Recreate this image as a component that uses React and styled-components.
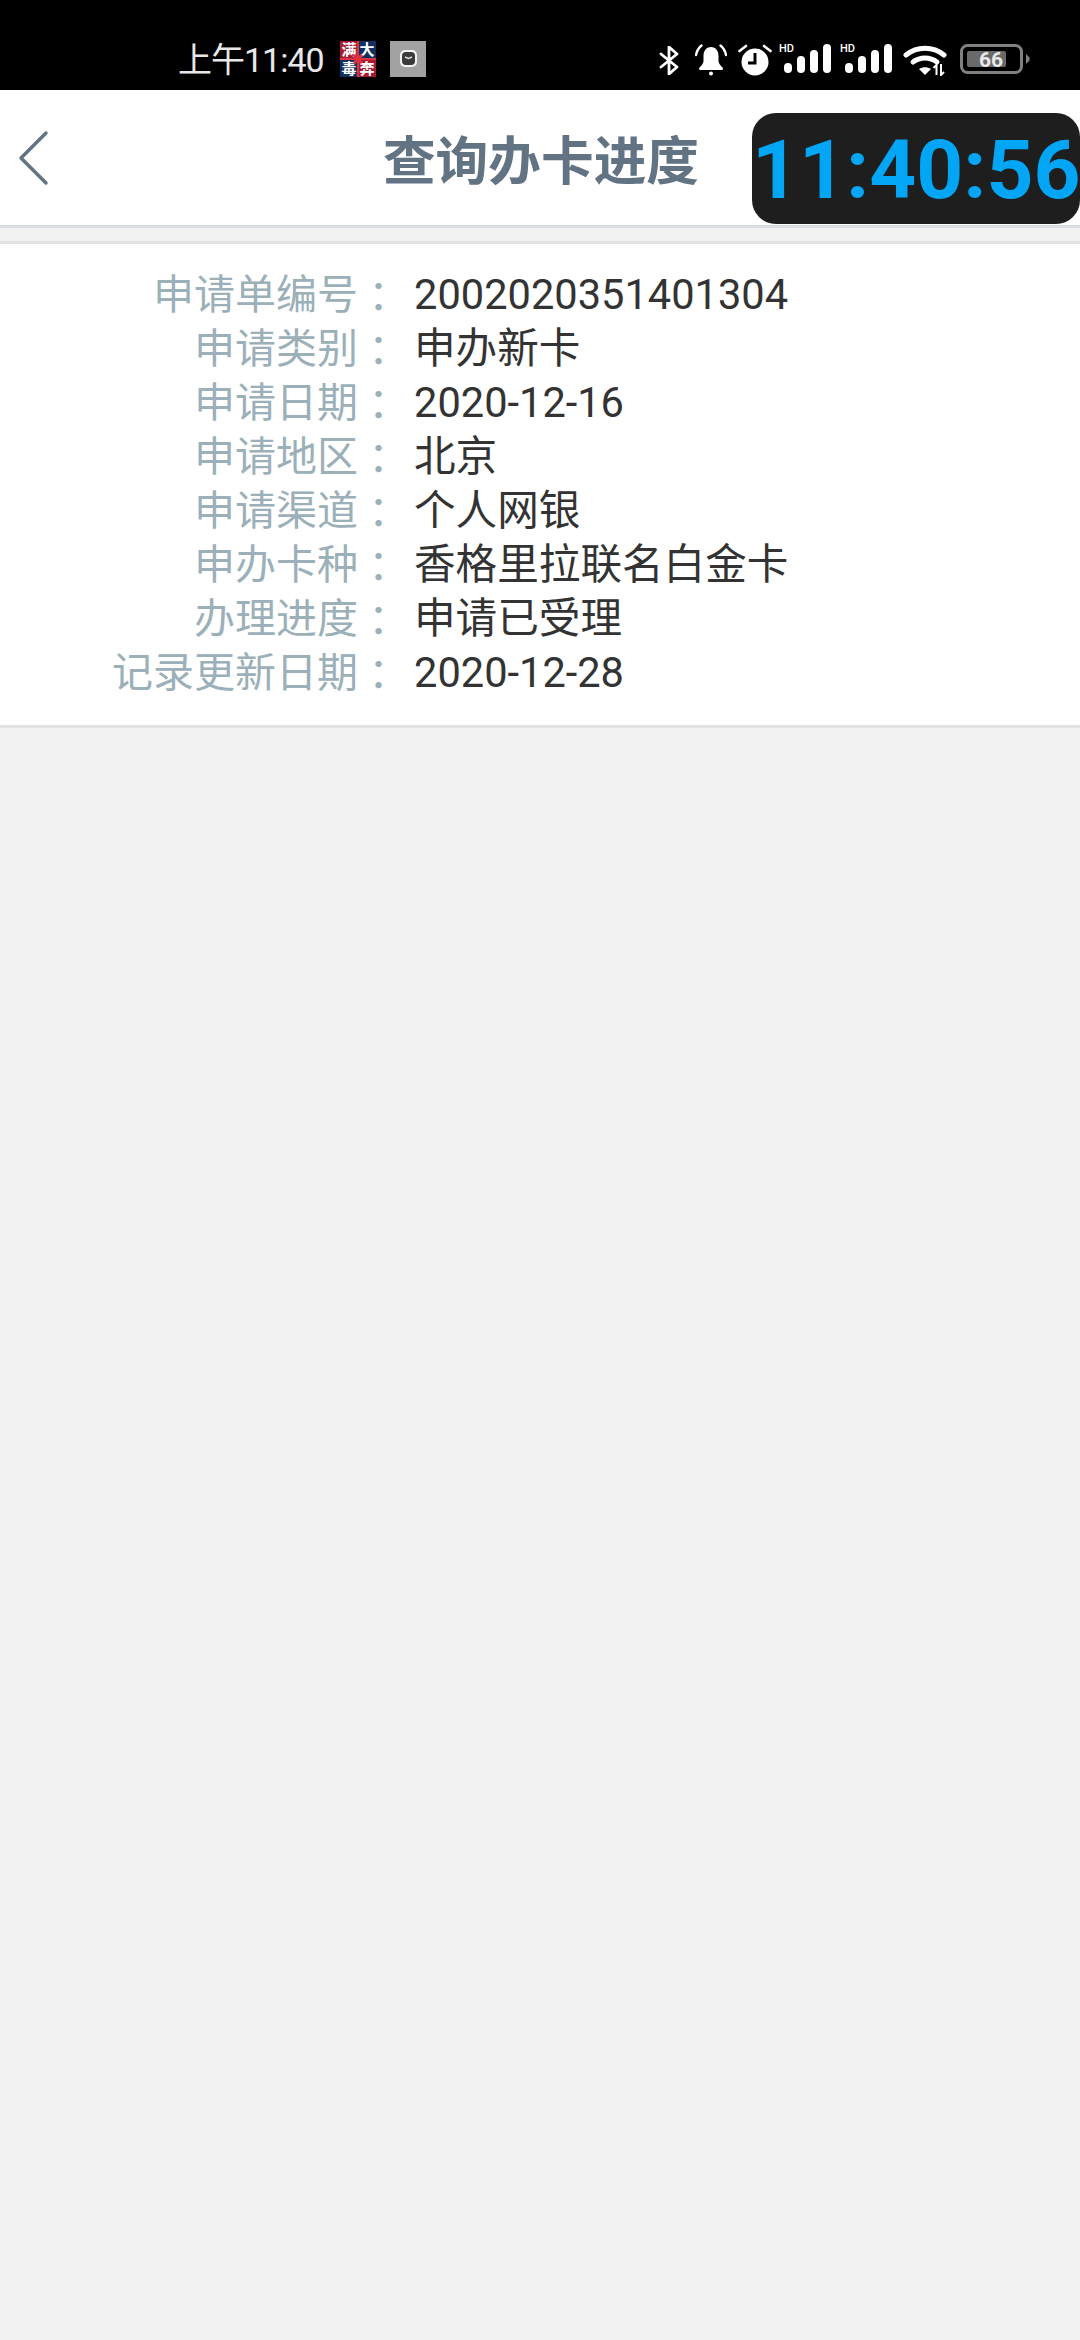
import React from "react";
import styled, { createGlobalStyle } from "styled-components";

const GlobalStyle = createGlobalStyle`
  html, body {
    margin: 0;
    padding: 0;
    background: #f2f2f2;
  }
  body {
    font-family: Roboto, "Noto Sans CJK SC", sans-serif;
  }
`;

const Page = styled.div`
  position: relative;
  width: 1080px;
  height: 2340px;
  overflow: hidden;
  background: #f2f2f2;
`;

const StatusBar = styled.div`
  height: 90px;
  background: #000;
  display: flex;
  align-items: flex-start;
  padding: 0 50px 0 178px;
  box-sizing: border-box;
`;

const Clock = styled.span`
  font-size: 34px;
  letter-spacing: -1px;
  color: #e8e8e8;
  line-height: 36px;
  margin-right: 16px;
  margin-top: 42px;
  white-space: nowrap;
`;

const NotifyIcon = styled.div`
  width: 36px;
  height: 36px;
  margin-right: 14px;
  margin-top: 41px;
  flex: none;
  svg {
    display: block;
  }
`;

const StatusRight = styled.div`
  margin-left: auto;
  display: flex;
  align-items: flex-start;
  margin-top: 43px;
  svg {
    display: block;
    flex: none;
  }
`;

const NavBar = styled.header`
  height: 135px;
  background: #fff;
  border-bottom: 3px solid #d5dfe5;
  display: flex;
  align-items: center;
  justify-content: center;
  position: relative;
`;

const BackIcon = styled.svg`
  position: absolute;
  left: 17px;
  top: 40px;
`;

const Title = styled.h1`
  margin: 8px 0 0 2px;
  font-size: 52.7px;
  line-height: 60px;
  font-weight: 700;
  color: #627384;
`;

const TimeBadge = styled.div`
  position: absolute;
  right: 0;
  top: 23px;
  width: 328px;
  height: 111px;
  border-radius: 24px;
  background: #1e1e1e;
  color: #03a5f5;
  font-family: Roboto, sans-serif;
  font-weight: 700;
  font-size: 82px;
  line-height: 115px;
  text-align: center;
  white-space: nowrap;
`;

const Gap = styled.div`
  height: 13px;
  background: #f2f2f2;
`;

const Card = styled.section`
  background: #fff;
  border-top: 3px solid #e2e2e2;
  border-bottom: 3px solid #e2e2e2;
  padding: 24px 0 25px;
`;

const Row = styled.div`
  display: flex;
  height: 54px;
  font-size: 41.6px;
  line-height: 54px;
`;

const Label = styled.div`
  width: 399px;
  flex: none;
  text-align: right;
  font-size: 41px;
  color: #9bb0b8;
  white-space: nowrap;
`;

const Colon = styled.span`
  font-family: "Noto Sans CJK TC", sans-serif;
  line-height: 0;
  vertical-align: -3px;
`;

const Value = styled.div`
  margin-left: 15px;
  color: #333;
  white-space: nowrap;
`;

const rows = [
  ["申请单编号", "2002020351401304"],
  ["申请类别", "申办新卡"],
  ["申请日期", "2020-12-16"],
  ["申请地区", "北京"],
  ["申请渠道", "个人网银"],
  ["申办卡种", "香格里拉联名白金卡"],
  ["办理进度", "申请已受理"],
  ["记录更新日期", "2020-12-28"],
];

const GiftLogo = () => (
  <svg width="36" height="36" viewBox="0 0 36 36">
    <rect width="36" height="36" fill="#12305f" />
    <rect x="0" y="0" width="18" height="17" fill="#a81a32" />
    <rect x="19" y="19" width="17" height="17" fill="#a81a32" />
    <g fill="#fff" fontSize="15" fontWeight="700" textAnchor="middle" fontFamily="'Noto Sans CJK SC', sans-serif">
      <text x="9" y="14">满</text>
      <text x="27" y="14">大</text>
      <text x="9" y="33">毒</text>
      <text x="27" y="33">奔</text>
    </g>
    <path d="M0 18h36M18 0v36" stroke="#e0313f" strokeWidth="2" />
    <path d="M14 14l8 8M22 14l-8 8" stroke="#e0313f" strokeWidth="3" />
  </svg>
);

const WatchApp = () => (
  <svg width="36" height="36" viewBox="0 0 36 36">
    <rect width="36" height="36" fill="#a2a2a2" />
    <rect x="10" y="9" width="17" height="17" rx="5" fill="#f2f2f2" />
    <rect x="12" y="11" width="13" height="13" rx="4" fill="#3a3a3a" />
    <path d="M15 16l3.5 1.5L22 16" stroke="#ddd" strokeWidth="1.4" fill="none" />
  </svg>
);

const Bluetooth = () => (
  <svg width="21" height="29" viewBox="0 0 21 29" style={{ marginTop: 3 }}>
    <path d="M2 8l16 13-8 7V1l8 7L2 21" fill="none" stroke="#fff" strokeWidth="2.800" strokeLinejoin="round" strokeLinecap="round" />
  </svg>
);

const Bell = () => (
  <svg width="32" height="32" viewBox="0 0 32 32" style={{ marginLeft: 15, marginTop: 1 }}>
    <path d="M16 3c-5 0-7.500 4-7.500 9v5c0 2-1.500 4-3.500 6h22c-2-2-3.500-4-3.500-6v-5c0-5-2.500-9-7.500-9z" fill="#fff" />
    <rect x="4" y="23" width="24" height="3" rx="1.500" fill="#fff" />
    <circle cx="16" cy="29.500" r="2" fill="#fff" />
    <path d="M6.500 1.500C3.500 4 1.800 7 1 11M25.500 1.500C28.500 4 30.200 7 31 11" fill="none" stroke="#fff" strokeWidth="2.400" strokeLinecap="round" />
  </svg>
);

const Alarm = () => (
  <svg width="34" height="32" viewBox="0 0 34 32" style={{ marginLeft: 11, marginTop: 1 }}>
    <circle cx="17" cy="18" r="13.500" fill="#fff" />
    <path d="M17 9v10h-7" fill="none" stroke="#000" strokeWidth="3" />
    <path d="M1.500 7L8 2M32.500 7L26 2" fill="none" stroke="#fff" strokeWidth="2.600" strokeLinecap="round" />
  </svg>
);

const Signal = () => (
  <svg width="54" height="32" viewBox="0 0 54 32" style={{ marginLeft: 7 }}>
    <text x="0" y="9" fontSize="11" fontWeight="500" fill="#fff" fontFamily="Roboto, sans-serif">HD</text>
    <rect x="5" y="20" width="8" height="10" rx="4" fill="#fff" />
    <rect x="18" y="13" width="8" height="17" rx="4" fill="#fff" />
    <rect x="31" y="7" width="8" height="23" rx="4" fill="#fff" />
    <rect x="44" y="1" width="8" height="29" rx="4" fill="#fff" />
  </svg>
);

const Wifi = () => (
  <svg width="44" height="32" viewBox="0 0 44 32" style={{ marginLeft: 9, marginTop: 1 }}>
    <path d="M3 11C14 2 30 2 41 11" fill="none" stroke="#fff" strokeWidth="5" strokeLinecap="round" />
    <path d="M10 18c7-5.500 17-5.500 24 0" fill="none" stroke="#fff" strokeWidth="5" strokeLinecap="round" />
    <path d="M16 25c4-2.500 8-2.500 12 0l-6 6z" fill="#fff" />
    <path d="M33.500 31V21l-3 3M38 20v11l3-3" fill="none" stroke="#fff" strokeWidth="2" />
  </svg>
);

const Battery = () => (
  <svg width="70" height="32" viewBox="0 0 70 32" style={{ marginLeft: 13 }}>
    <rect x="1.500" y="2.500" width="60" height="27" rx="6" fill="none" stroke="#808080" strokeWidth="3" />
    <rect x="7" y="8" width="39" height="16" rx="2" fill="#6a6a6a" />
    <text x="31" y="24" fontSize="21" fontWeight="700" fill="#e8e8e8" textAnchor="middle" fontFamily="Roboto, sans-serif">66</text>
    <path d="M66 11l3.500 3.500v3L66 21z" fill="#808080" />
  </svg>
);

const App = () => {
  return (
    <Page>
      <GlobalStyle />
      <StatusBar>
        <Clock>上午11:40</Clock>
        <NotifyIcon><GiftLogo /></NotifyIcon>
        <NotifyIcon><WatchApp /></NotifyIcon>
        <StatusRight>
          <Bluetooth />
          <Bell />
          <Alarm />
          <Signal />
          <Signal />
          <Wifi />
          <Battery />
        </StatusRight>
      </StatusBar>
      <NavBar>
        <BackIcon width="32" height="56" viewBox="0 0 32 56">
          <path d="M29 3L4 28l25 25" fill="none" stroke="#627384" strokeWidth="3.500" strokeLinecap="round" strokeLinejoin="round" />
        </BackIcon>
        <Title>查询办卡进度</Title>
        <TimeBadge>11:40:56</TimeBadge>
      </NavBar>
      <Gap />
      <Card>
        {rows.map(([label, value]) => (
          <Row key={label}>
            <Label>{label}<Colon>：</Colon></Label>
            <Value>{value}</Value>
          </Row>
        ))}
      </Card>
    </Page>
  );
};

export default App;
